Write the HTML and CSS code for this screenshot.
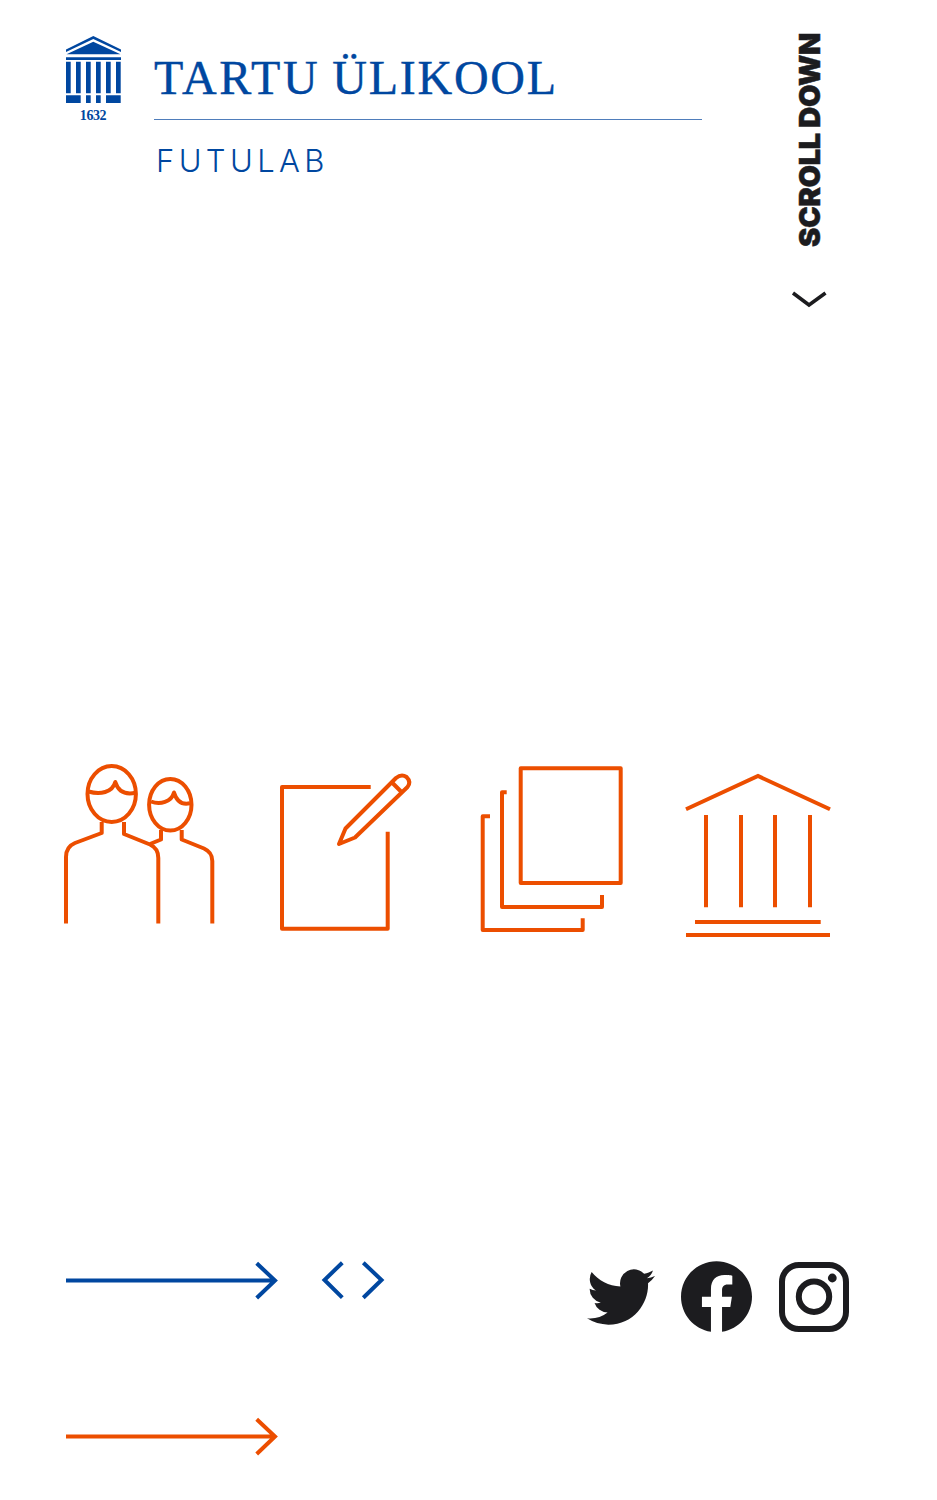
FILE: index.html
```html
<!DOCTYPE html>
<html lang="et">
<head>
<meta charset="utf-8">
<title>Futulab</title>
<link rel="stylesheet" href="styles.css">
</head>
<body>
<div class="page">
  <header class="header">
    <svg class="logo" width="60" height="90" viewBox="64 34 60 90">
      <path class="blue-fill" d="M93.3 36 L121 49.5 V52 L93.3 39 L66 52 V49.5 Z"/>
      <path class="blue-fill" d="M93.3 41.7 L120.5 54.3 H66.5 Z"/>
      <path class="blue-fill" d="M66 57.3H121V60H66Z"/>
      <path class="blue-fill" d="M66 61.7h4.7v31.6H66ZM76 61.7h4.7v31.6H76ZM86 61.7h4.7v31.6H86ZM96 61.7h4.7v31.6H96ZM106 61.7h4.7v31.6H106ZM116 61.7h4.7v31.6H116Z"/>
      <path class="blue-fill" d="M66 95.3h14.7v7.7H66ZM86 95.3h4.7v7.7H86ZM96 95.3h4.7v7.7H96ZM106 95.3h14.7v7.7H106Z"/>
      <text class="logo-year" x="93" y="120" text-anchor="middle">1632</text>
    </svg>
    <div class="brand">
      <div class="brand-title"><span class="word-first">TARTU</span> <span class="word-second">ÜLIKOOL</span></div>
      <div class="brand-sub">FUTULAB</div>
    </div>
    <div class="scroll">
      <span class="scroll-text">SCROLL DOWN</span>
      <svg class="scroll-chevron" width="38" height="20" viewBox="790 290 38 20">
        <path class="dark-line" d="M793 293 L809 305 L825.5 293"/>
      </svg>
    </div>
  </header>

  <section class="icons">
    <svg width="154" height="180" viewBox="64 760 154 180">
      <g class="orange-line">
        <ellipse cx="111.7" cy="794" rx="24.2" ry="28"/>
        <path d="M88.5 791.5 C100 795 112.5 792.5 115.3 782 C118 791 125 795 135.5 792.8"/>
        <path d="M101.7 822 V833 L75 843 C69 845.5 66 850 66 857 V923.5"/>
        <path d="M124 822 V834 L150 844.5 C155.5 847 158.3 851 158.3 858 V923.5"/>
        <ellipse cx="170.3" cy="804.8" rx="21.2" ry="25.8"/>
        <path d="M151 801.5 C160 805 171.5 802 174 792.5 C176.5 801 182 805 190 803.3"/>
        <path d="M161 830 V839.5 L150 844"/>
        <path d="M181.7 830 V839.5 L204 848.5 C209.5 851 212.3 854.5 212.3 861 V923.5"/>
      </g>
    </svg>
    <svg width="146" height="180" viewBox="274 760 146 180">
      <g class="orange-line">
        <path d="M370.7 787 H282 V928.7 H387.7 V831.7"/>
        <path d="M339 844 L345.5 828.5 L396 778 Q401.5 773.5 406.5 777 Q411.5 782 407.5 787 L355 837.5 Z"/>
        <path d="M392.5 783 L401 791.5"/>
      </g>
    </svg>
    <svg width="150" height="180" viewBox="476 760 150 180">
      <g class="orange-line">
        <path d="M520.7 768.3 H620.7 V883 H520.7 Z"/>
        <path d="M506.7 792.3 H502 V907 H602 V895"/>
        <path d="M490 816.3 H482.7 V930 H582.7 V918.3"/>
      </g>
    </svg>
    <svg width="154" height="180" viewBox="680 760 154 180">
      <g class="orange-line">
        <path class="miter" d="M686 809.3 L758 776 L830 809.3"/>
        <path class="miter" d="M706 815 V907.3 M741 815 V907.3 M775 815 V907.3 M810 815 V907.3"/>
        <path class="miter" d="M695 922 H820.7 M686 935 H830"/>
      </g>
    </svg>
  </section>

  <section class="controls">
    <svg class="arrow" width="216" height="44" viewBox="64 1258 216 44">
      <path class="blue-line" d="M66 1280.5 H275 M256.7 1263.3 L275 1280.5 L256.7 1298"/>
    </svg>
    <svg class="pager" width="68" height="44" viewBox="320 1258 68 44">
      <path class="blue-line" d="M342.3 1262.7 L324.5 1280 L342.3 1297.7"/>
      <path class="blue-line" d="M363.3 1262.7 L381.5 1280 L363.3 1297.7"/>
    </svg>
    <div class="social">
      <svg class="bird" width="68" height="68" viewBox="0 0 24 24">
        <path class="dark-fill" d="M23.953 4.57a10 10 0 01-2.825.775 4.958 4.958 0 002.163-2.723c-.951.555-2.005.959-3.127 1.184a4.92 4.92 0 00-8.384 4.482C7.69 8.095 4.067 6.13 1.64 3.162a4.822 4.822 0 00-.666 2.475c0 1.71.87 3.213 2.188 4.096a4.904 4.904 0 01-2.228-.616v.06a4.923 4.923 0 003.946 4.827 4.996 4.996 0 01-2.212.085 4.936 4.936 0 004.604 3.417 9.867 9.867 0 01-6.102 2.105c-.39 0-.779-.023-1.17-.067a13.995 13.995 0 007.557 2.209c9.053 0 13.998-7.496 13.998-13.985 0-.21 0-.42-.015-.63A9.935 9.935 0 0024 4.59z"/>
      </svg>
      <svg class="fb" width="71" height="71" viewBox="0 0 24 24">
        <path class="dark-fill" d="M24 12.073c0-6.627-5.373-12-12-12s-12 5.373-12 12c0 5.99 4.388 10.954 10.125 11.854v-8.385H7.078v-3.47h3.047V9.43c0-3.007 1.792-4.669 4.533-4.669 1.312 0 2.686.235 2.686.235v2.953H15.83c-1.491 0-1.956.925-1.956 1.874v2.25h3.328l-.532 3.47h-2.796v8.385C19.612 23.027 24 18.062 24 12.073z"/>
      </svg>
      <svg class="insta" width="72" height="72" viewBox="778 1261 72 72">
        <rect class="dark-line wide" x="782" y="1265" width="64" height="64" rx="17"/>
        <circle class="dark-line wide" cx="814" cy="1296.7" r="15.2"/>
        <circle class="dark-fill" cx="832.3" cy="1278" r="4.4"/>
      </svg>
    </div>
  </section>

  <section class="footer-arrow">
    <svg width="216" height="44" viewBox="64 1414 216 44">
      <path class="orange-stroke" d="M66 1436.5 H275 M256.7 1419.3 L275 1436.5 L256.7 1454"/>
    </svg>
  </section>
</div>
</body>
</html>
```

FILE: styles.css
```css
* { box-sizing: border-box; }

html, body {
  margin: 0;
  padding: 0;
  background: #fff;
}

svg { display: block; flex: none; }

.page {
  width: 937px;
  height: 1500px;
  overflow: hidden;
}

.header {
  display: flex;
  align-items: flex-start;
  height: 760px;
  padding: 33px 0 0 64px;
}

.logo { margin-top: 1px; }

.logo-year {
  font-family: "Liberation Serif", serif;
  font-weight: 700;
  font-size: 14px;
  letter-spacing: -0.4px;
  fill: #0047a0;
}

.blue-fill { fill: #0047a0; }
.dark-fill { fill: #1c1c1f; }

.brand {
  width: 548px;
  margin-left: 30px;
  padding-top: 21px;
}

.brand-title {
  font-family: "Liberation Serif", serif;
  font-size: 48px;
  line-height: 48px;
  color: #0047a0;
  -webkit-text-stroke: 0.4px #0047a0;
  white-space: nowrap;
  padding-bottom: 17px;
  border-bottom: 1px solid #4f7dbb;
}

.word-first { letter-spacing: 2.6px; }
.word-second { letter-spacing: 1.75px; }

.brand-sub {
  margin-top: 22px;
  padding-left: 2px;
  font-family: Inter, sans-serif;
  font-weight: 300;
  font-size: 31px;
  line-height: 37px;
  letter-spacing: 4.4px;
  color: #0047a0;
}

.scroll {
  display: flex;
  flex-direction: column;
  align-items: center;
  width: 40px;
  margin-left: 87px;
}

.scroll-text {
  writing-mode: vertical-rl;
  transform: rotate(180deg);
  font-family: Inter, sans-serif;
  font-weight: 900;
  font-size: 29px;
  line-height: 21px;
  letter-spacing: -0.3px;
  -webkit-text-stroke: 0.5px #1c1c1f;
  color: #1c1c1f;
  white-space: nowrap;
}

.scroll-chevron { margin-top: 43px; }

.dark-line {
  fill: none;
  stroke: #1c1c1f;
  stroke-width: 3.6;
}

.dark-line.wide { stroke-width: 6; }

.icons {
  display: grid;
  grid-template-columns: 210px 202px 204px auto;
  height: 498px;
  padding-left: 64px;
}

.orange-line {
  fill: none;
  stroke: #ec4e00;
  stroke-width: 4;
  stroke-linejoin: round;
}

.miter { stroke-linejoin: miter; }

.controls {
  display: flex;
  align-items: flex-start;
  height: 156px;
  padding-left: 64px;
}

.blue-line {
  fill: none;
  stroke: #0047a0;
  stroke-width: 4;
}

.orange-stroke {
  fill: none;
  stroke: #ec4e00;
  stroke-width: 4;
}

.pager { margin-left: 40px; }

.social {
  display: flex;
  align-items: flex-start;
  margin-left: 199px;
}

.bird { margin-top: 5px; }

.fb { margin-left: 26px; margin-top: 3px; }

.insta { margin-left: 26px; margin-top: 3px; }

.footer-arrow { padding-left: 64px; }
```
